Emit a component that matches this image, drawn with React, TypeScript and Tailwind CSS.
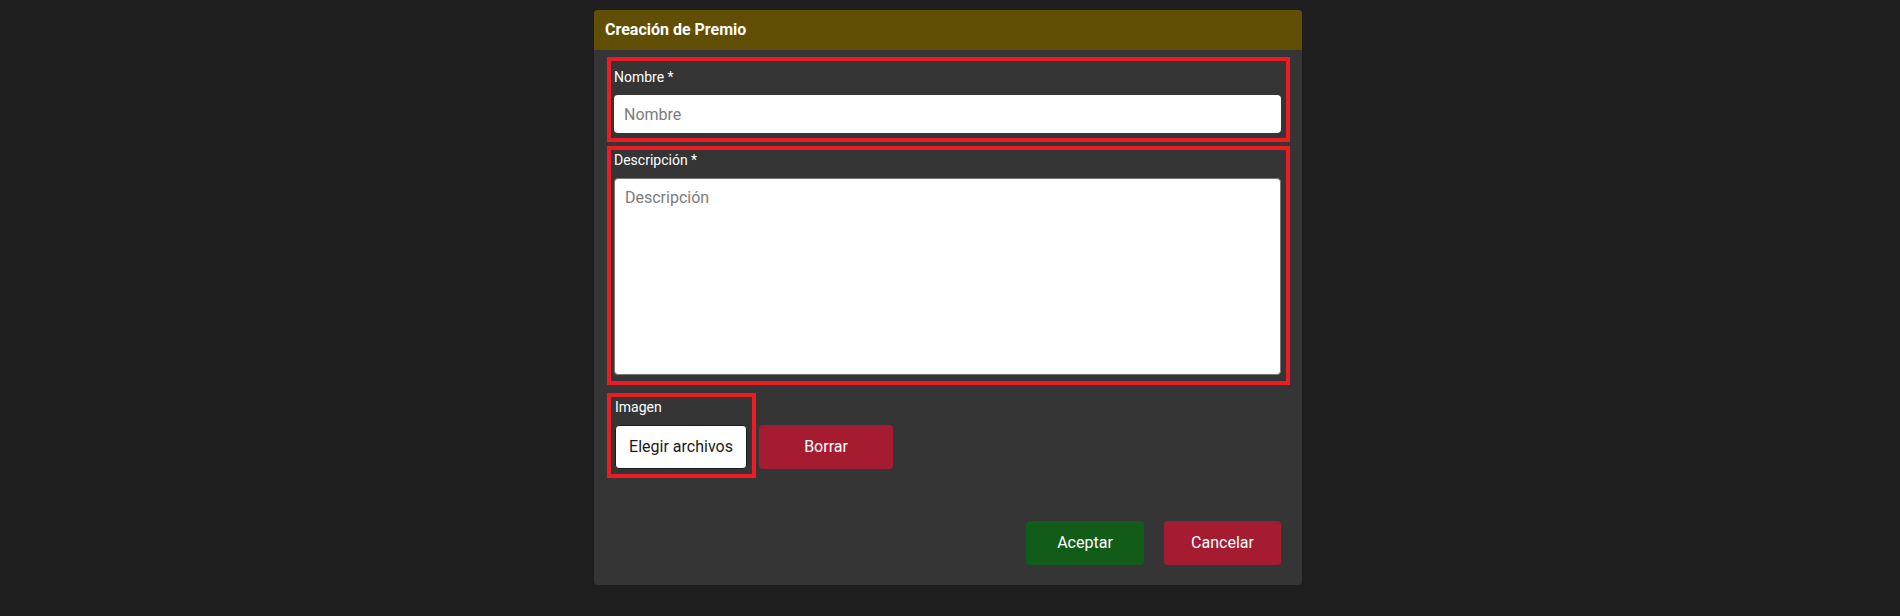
import React from "react";

export default function App() {
  return (
    <div className="min-h-[616px] w-full bg-[#1e1e1e] font-['Roboto',sans-serif] pt-[10px] pr-[4px] flex justify-center items-start">
      <div className="w-[708px] rounded-[4px] bg-[#353535] overflow-hidden">
        <div className="h-[40px] bg-[#5f4e03] flex items-center pl-[11px]">
          <span className="text-[16px] font-bold text-white leading-none">Creación de Premio</span>
        </div>
        <div className="pt-[7px] pl-[13px] pr-[12px] pb-[20px] flex flex-col">
          <div className="border-4 border-[#ed1c24] pt-[8px] pb-[5px] pl-[3px] pr-[5px] flex flex-col">
            <label className="text-[14px] leading-[16px] font-normal text-white">Nombre *</label>
            <input
              placeholder="Nombre"
              className="mt-[10px] h-[38px] w-full rounded-[4px] bg-white px-[10px] text-[16px] text-[#222] placeholder:text-[#7b7b7b] outline-none font-['Roboto',sans-serif]"
            />
          </div>
          <div className="mt-[4px] border-4 border-[#ed1c24] pt-[2px] pb-[6px] pl-[3px] pr-[5px] flex flex-col">
            <label className="text-[14px] leading-[16px] font-normal text-white">Descripción *</label>
            <textarea
              placeholder="Descripción"
              className="mt-[10px] h-[197px] w-full resize-none rounded-[4px] border border-[#767676] bg-white px-[10px] py-[7px] text-[16px] text-[#222] placeholder:text-[#7b7b7b] outline-none font-['Roboto',sans-serif]"
            />
          </div>
          <div className="mt-[8px] flex items-end gap-[3px]">
            <div className="w-[149px] border-4 border-[#ed1c24] pt-[2px] pb-[5px] pl-[4px] flex flex-col">
              <label className="text-[14px] leading-[16px] font-normal text-white">Imagen</label>
              <button className="mt-[10px] h-[44px] w-[132px] rounded-[4px] border border-[#1a1a1a] bg-white text-[16px] text-[#1a1a1a]">
                Elegir archivos
              </button>
            </div>
            <button className="mb-[9px] h-[44px] w-[134px] rounded-[4px] bg-[#a51c30] text-[16px] text-white">
              Borrar
            </button>
          </div>
          <div className="mt-[43px] flex justify-end gap-[20px] pr-[9px]">
            <button className="h-[44px] w-[118px] rounded-[4px] bg-[#125c1a] text-[16px] text-white">Aceptar</button>
            <button className="h-[44px] w-[117px] rounded-[4px] bg-[#a51c30] text-[16px] text-white">Cancelar</button>
          </div>
        </div>
      </div>
    </div>
  );
}
